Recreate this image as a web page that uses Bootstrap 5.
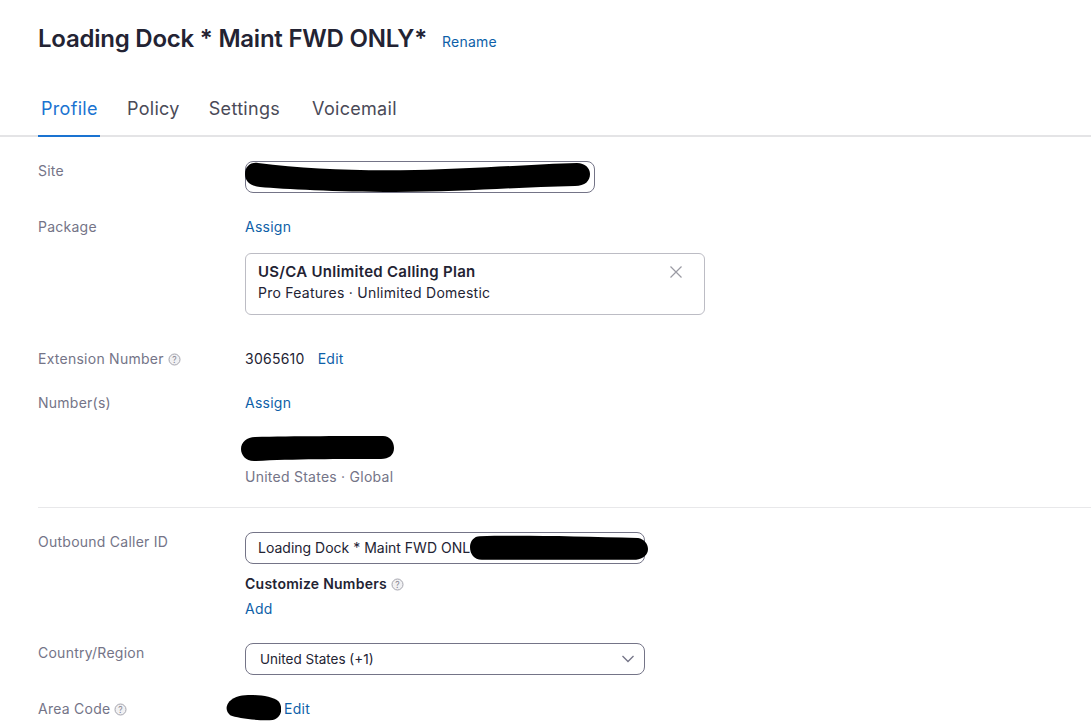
<!DOCTYPE html>
<html lang="en">
  <head>
    <meta charset="UTF-8" />
    <meta name="viewport" content="width=device-width, initial-scale=1" />
    <title>Loading Dock * Maint FWD ONLY*</title>
    <link href="https://cdn.jsdelivr.net/npm/bootstrap@5.3.3/dist/css/bootstrap.min.css" rel="stylesheet" />
    <style>
      body { font-family: Inter, "Liberation Sans", sans-serif; font-size: 14px; line-height: 20px; letter-spacing: 0.25px; color: #232333; overflow: hidden; }
      a { color: #0e5fa8; text-decoration: none; }
      .page-wrap { height: 728px; overflow: hidden; padding: 24px 0 0 38px; }
      .page-title { font-size: 24px; line-height: 30px; font-weight: 600; margin: 0; color: #232333; letter-spacing: -0.23px; }
      .rename-link { margin-left: 15px; padding-top: 6px; }
      .tab-bar { margin: 37px 0 0 -38px; padding-left: 38px; border-bottom: 2px solid #e4e4e6; height: 46px; }
      .tab-bar .nav-link { font-size: 18px; line-height: 24px; letter-spacing: 0.3px; color: #4a4a57; padding: 6px 0 0; margin-right: 30px; height: 46px; border-bottom: 2px solid transparent; }
      .tab-bar .nav-link.active { color: #1a73d1; padding: 6px 3px 0; margin-right: 27px; border-bottom-color: #1a73d1; width: 62px; }
      .tab-bar .nav-item:nth-child(2) .nav-link { margin-right: 29px; }
      .tab-bar .nav-item:nth-child(3) .nav-link { margin-right: 32px; }
      .field-row { display: flex; margin-top: 24px; }
      .field-row.after-card { margin-top: 34px; }
      .field-row.no-gap { margin-top: 0; }
      .field-label { width: 207px; flex: none; color: #747487; }
      .field-box { position: relative; height: 32px; border: 1px solid #747487; border-radius: 8px; padding: 5px 12px; background: #fff; letter-spacing: 0; }
      .box-site { width: 350px; }
      .box-wide { width: 400px; }
      .plan-card { position: relative; width: 460px; height: 62px; border: 1px solid #bcbcc4; border-radius: 6px; padding: 7px 12px; margin-top: 16px; }
      .plan-name { font-size: 15px; line-height: 22px; font-weight: 600; letter-spacing: 0.28px; }
      .plan-close { position: absolute; top: 11px; right: 21px; }
      .help-icon { display: inline-block; vertical-align: -2px; margin-left: 4px; }
      .help-icon text { font-size: 8.5px; font-weight: 400; text-anchor: middle; fill: #85858f; }
      .help-icon circle { fill: #f1f1f3; stroke: #a5a5ae; }
      .muted-text { color: #747487; margin-top: 5px; }
      .section-rule { border: 0; border-top: 1px solid #e8e8ea; opacity: 1; margin: 20px 0 24px; }
      .subhead { font-weight: 600; margin-top: 10px; }
      .add-line { margin-top: 5px; }
      .edit-link { margin-left: 13px; }
      .number-slot { height: 26px; margin-top: 23px; position: relative; }
      .scribble { position: absolute; fill: #000; }
      .scribble-site { left: -1px; top: -1px; }
      .scribble-number { left: -4px; top: 0; }
      .scribble-caller { left: 224px; top: 2px; }
      .scribble-area { left: -20px; top: -5px; }
      .select-chevron { position: absolute; right: 9px; top: 10px; }
      .select-text { padding-left: 2px; font-size: 13.5px; }
      .area-slot { position: relative; padding-left: 39px; }
    </style>
  </head>
  <body>
    <div class="page-wrap">
      <div class="d-flex align-items-center">
        <h1 class="page-title">Loading Dock * Maint FWD ONLY*</h1>
        <a href="#" class="rename-link">Rename</a>
      </div>

      <ul class="nav tab-bar">
        <li class="nav-item"><a class="nav-link active" href="#">Profile</a></li>
        <li class="nav-item"><a class="nav-link" href="#">Policy</a></li>
        <li class="nav-item"><a class="nav-link" href="#">Settings</a></li>
        <li class="nav-item"><a class="nav-link" href="#">Voicemail</a></li>
      </ul>

      <div class="field-row">
        <div class="field-label">Site</div>
        <div class="field-box box-site">
          <svg class="scribble scribble-site" width="346" height="32" viewBox="0 0 346 32"><path d="M13 2C60 8 110 10 170 9C230 8 290 3 332 2C340 2 345 7 345 13C345 20 340 25 330 25C270 26 220 31 150 31C90 31 40 28 15 26C5 25 0 20 0 13C0 6 5 1 13 2Z"/></svg>
        </div>
      </div>

      <div class="field-row">
        <div class="field-label">Package</div>
        <div>
          <a href="#">Assign</a>
          <div class="plan-card">
            <div class="plan-name">US/CA Unlimited Calling Plan</div>
            <div>Pro Features · Unlimited Domestic</div>
            <svg class="plan-close" width="14" height="14" viewBox="0 0 14 14"><path d="M1.5 1.5L12.5 12.5M12.5 1.5L1.5 12.5" stroke="#9a9aa3" stroke-width="1.2" fill="none"/></svg>
          </div>
        </div>
      </div>

      <div class="field-row after-card">
        <div class="field-label">Extension Number<svg class="help-icon" width="13" height="13" viewBox="0 0 13 13"><circle cx="6.5" cy="6.5" r="5.5"/><text x="6.5" y="9.6">?</text></svg></div>
        <div>3065610<a href="#" class="edit-link">Edit</a></div>
      </div>

      <div class="field-row">
        <div class="field-label">Number(s)</div>
        <div>
          <a href="#">Assign</a>
          <div class="number-slot">
            <svg class="scribble scribble-number" width="153" height="26" viewBox="0 0 153 26"><path d="M14 1C50 0 110 0 142 0C149 0 153 6 153 12C153 19 148 23 140 23C100 23 50 23 15 25C5 26 0 19 0 13C0 6 6 1 14 1Z"/></svg>
          </div>
          <div class="muted-text">United States · Global</div>
        </div>
      </div>

      <hr class="section-rule" />

      <div class="field-row no-gap">
        <div class="field-label">Outbound Caller ID</div>
        <div>
          <div class="field-box box-wide">
            Loading Dock * Maint FWD ONL
            <svg class="scribble scribble-caller" width="178" height="26" viewBox="0 0 180 26"><path d="M10 1C50 0 110 1 170 3C176 4 180 9 180 14C180 20 175 24 168 25C120 25 50 25 12 25C4 25 0 19 0 12C0 6 4 1 10 1Z"/></svg>
          </div>
          <div class="subhead">Customize Numbers<svg class="help-icon" width="13" height="13" viewBox="0 0 13 13"><circle cx="6.5" cy="6.5" r="5.5"/><text x="6.5" y="9.6">?</text></svg></div>
          <div class="add-line"><a href="#">Add</a></div>
        </div>
      </div>

      <div class="field-row">
        <div class="field-label">Country/Region</div>
        <div class="field-box box-wide">
          <span class="select-text">United States (+1)</span>
          <svg class="select-chevron" width="14" height="10" viewBox="0 0 14 10"><path d="M1.5 2L7 7.5L12.5 2" stroke="#747487" stroke-width="1.3" fill="none"/></svg>
        </div>
      </div>

      <div class="field-row">
        <div class="field-label">Area Code<svg class="help-icon" width="13" height="13" viewBox="0 0 13 13"><circle cx="6.5" cy="6.5" r="5.5"/><text x="6.5" y="9.6">?</text></svg></div>
        <div class="area-slot">
          <svg class="scribble scribble-area" width="56" height="27" viewBox="0 0 54 28" preserveAspectRatio="none"><path d="M14 2C25 0 45 1 52 8C56 14 55 24 46 27C32 28 12 25 5 22C-1 17 0 6 14 2Z"/></svg>
          <a href="#">Edit</a>
        </div>
      </div>
    </div>

    <script src="https://cdn.jsdelivr.net/npm/bootstrap@5.3.3/dist/js/bootstrap.bundle.min.js"></script>
  </body>
</html>
